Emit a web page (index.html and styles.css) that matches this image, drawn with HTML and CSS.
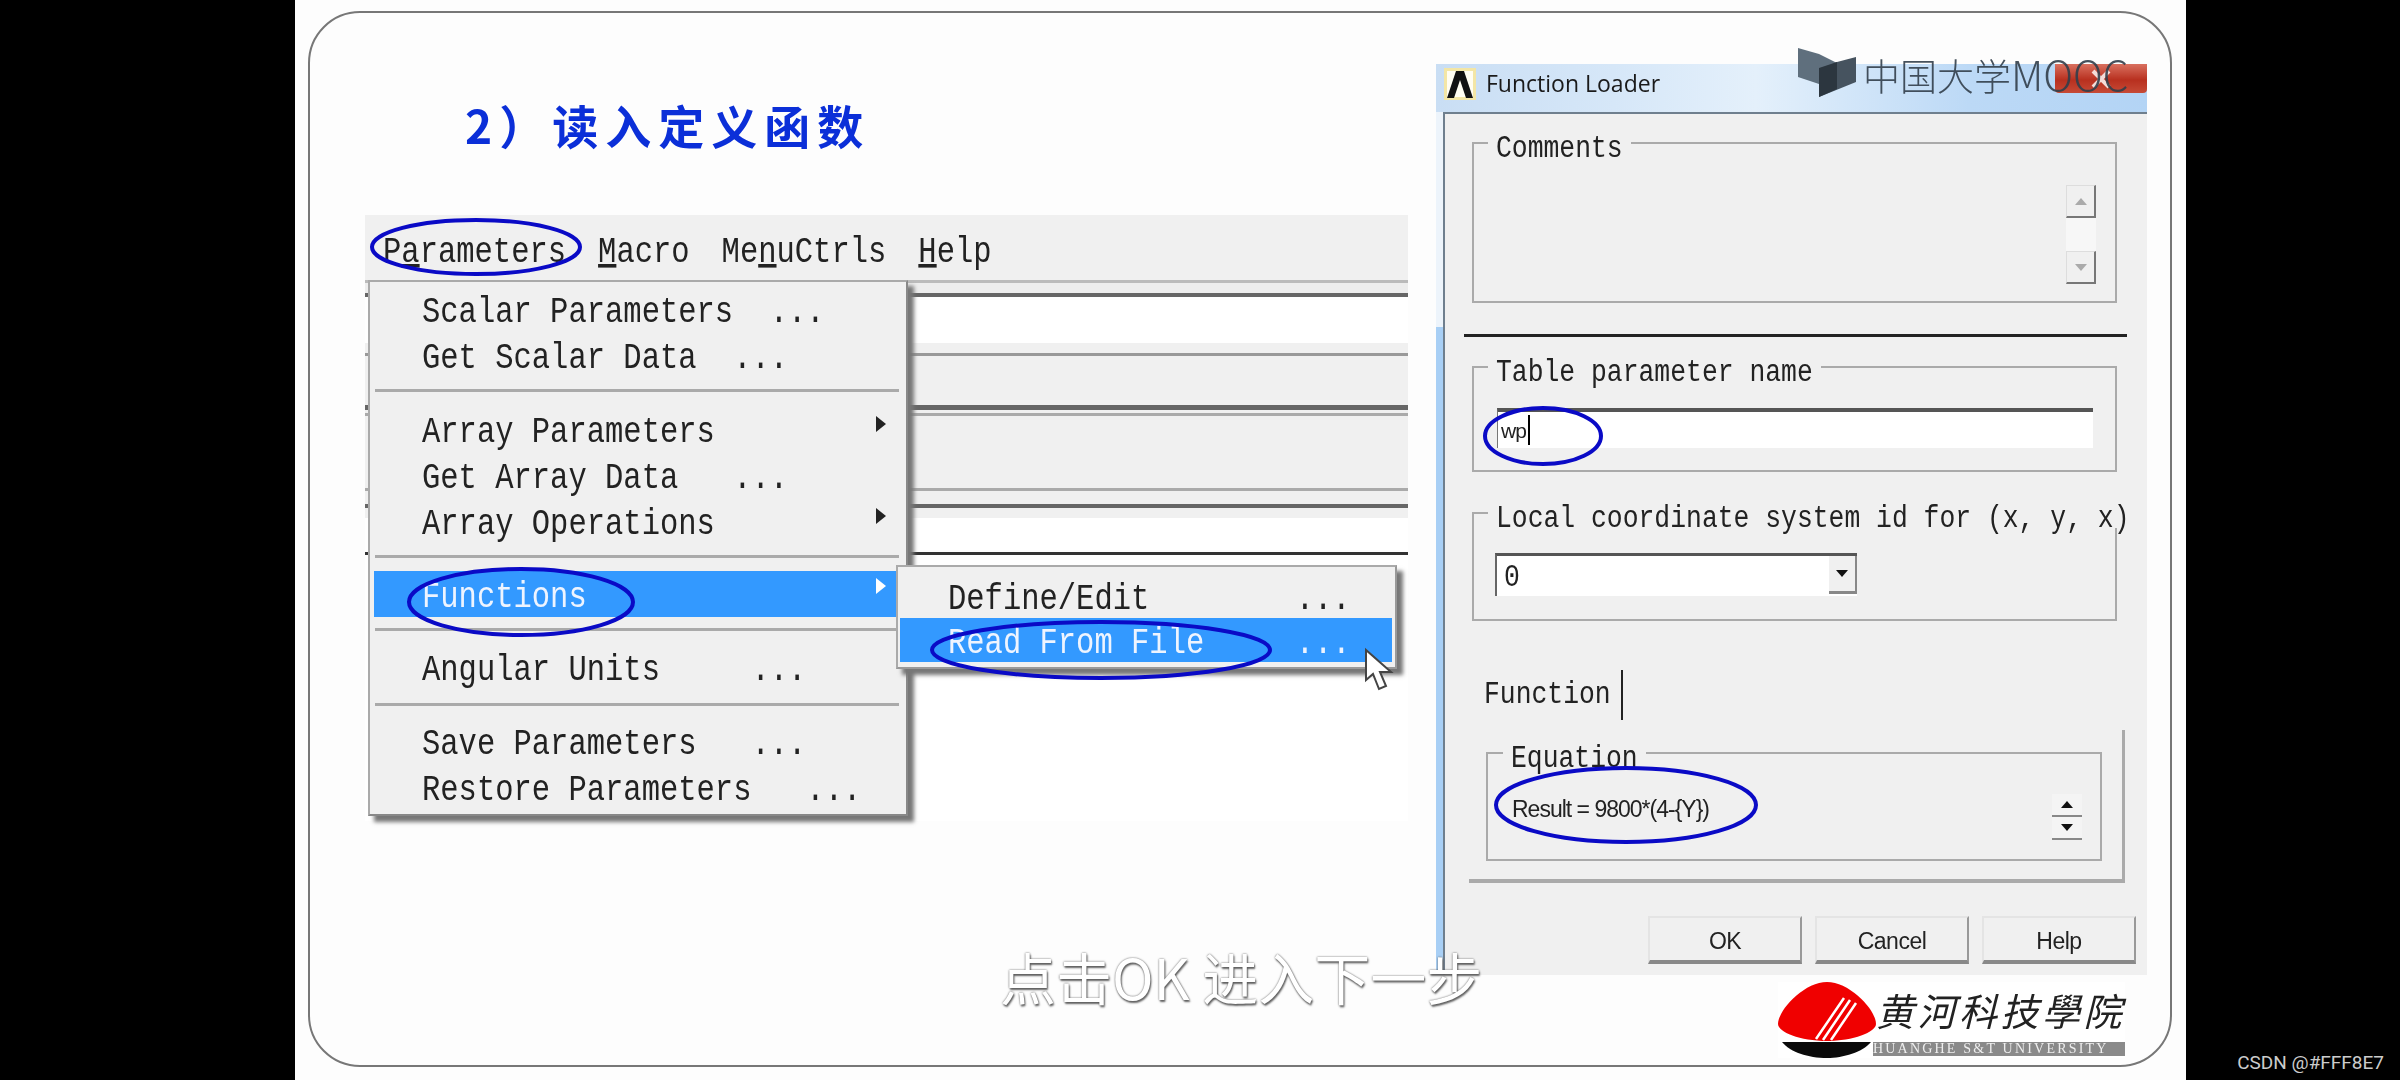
FILE: index.html
```html
<!DOCTYPE html>
<html>
	<head>
		<meta charset="UTF-8">
		<title>读入定义函数</title>
		<link rel="stylesheet" href="styles.css">
	</head>
	<body>
		<div class="slide">
			<div class="frame">
				<div class="left">
					<h1 class="title">2）读入定义函数</h1>
					<div class="capture">
						<div class="menubar">
							<span class="mono">P<u>a</u>rameters</span>
							<span class="mono"><u>M</u>acro</span>
							<span class="mono">Me<u>n</u>uCtrls</span>
							<span class="mono"><u>H</u>elp</span>
						</div>
						<div class="stripes"></div>
						<div class="menu">
							<div class="row"><span class="mono">Scalar Parameters  ...</span></div>
							<div class="row"><span class="mono">Get Scalar Data  ...</span></div>
							<div class="sep sep1"></div>
							<div class="row"><span class="mono">Array Parameters</span><i class="arrow"></i></div>
							<div class="row"><span class="mono">Get Array Data   ...</span></div>
							<div class="row"><span class="mono">Array Operations</span><i class="arrow"></i></div>
							<div class="sep sep2"></div>
							<div class="row active"><span class="mono">Functions</span><i class="arrow"></i></div>
							<div class="sep sep3"></div>
							<div class="row"><span class="mono">Angular Units     ...</span></div>
							<div class="sep sep4"></div>
							<div class="row"><span class="mono">Save Parameters   ...</span></div>
							<div class="row"><span class="mono">Restore Parameters   ...</span></div>
							<div class="submenu">
								<div class="row"><span class="mono">Define/Edit        ...</span></div>
								<div class="row active"><span class="mono">Read From File     ...</span></div>
							</div>
						</div>
					</div>
				</div>

				<div class="dialog">
					<div class="titlebar">
						<svg class="ansys" width="32" height="32" viewBox="0 0 32 32">
							<rect x="0" y="0" width="32" height="32" fill="#f3e6a6"/>
							<rect x="3" y="3" width="26" height="26" fill="#fffdf2"/>
							<polygon points="12,3 20,3 29,30 22,30 16,12 10,30 3,30" fill="#111"/>
						</svg>
						<span class="wintitle">Function Loader</span>
						<div class="close">
							<svg width="24" height="22" viewBox="0 0 24 22"><path d="M4 3 L20 19 M20 3 L4 19" stroke="#f4dcd8" stroke-width="4"/></svg>
						</div>
					</div>
					<div class="winbody">
						<div class="winside"></div>
						<div class="client">
							<fieldset class="group comments">
								<legend class="mono-legend"><span class="mono">Comments</span></legend>
								<div class="scroll">
									<div class="spin"><i class="up"></i></div>
									<div class="track"></div>
									<div class="spin"><i class="down"></i></div>
								</div>
							</fieldset>
							<div class="blackline"></div>
							<fieldset class="group tablename">
								<legend class="mono-legend"><span class="mono">Table parameter name</span></legend>
								<div class="input">wp<i class="caret"></i></div>
							</fieldset>
							<fieldset class="group local">
								<legend class="mono-legend"><span class="mono">Local coordinate system id for (x, y, x)</span></legend>
								<div class="combo">
									<span class="mono">0</span>
									<div class="dropbtn"><i class="down dark"></i></div>
								</div>
							</fieldset>
							<div class="tab"><span class="mono">Function</span></div>
							<div class="tabpanel">
								<fieldset class="group equation">
									<legend class="mono-legend"><span class="mono">Equation</span></legend>
									<div class="eqrow">
										<span class="result">Result = 9800*(4-{Y})</span>
										<div class="eqspin">
											<div class="minispin"><i class="up dark"></i></div>
											<div class="minispin"><i class="down dark"></i></div>
										</div>
									</div>
								</fieldset>
							</div>
							<div class="buttons">
								<div class="btn">OK</div>
								<div class="btn">Cancel</div>
								<div class="btn">Help</div>
							</div>
						</div>
					</div>
				</div>
			</div>

			<!-- 蓝色圈和鼠标，坐标直接用截图上的位置 -->
			<svg class="marks" width="1891" height="1080" viewBox="295 0 1891 1080">
				<g fill="none" stroke="#0a0ac6" stroke-width="4">
					<ellipse cx="476" cy="247" rx="104" ry="27"/>
					<ellipse cx="521" cy="602" rx="112" ry="33"/>
					<ellipse cx="1101" cy="650" rx="169" ry="28"/>
					<ellipse cx="1543" cy="436" rx="58" ry="28"/>
					<ellipse cx="1626" cy="805" rx="130" ry="37"/>
				</g>
				<path d="M1366 650 L1366 680 L1373 674 L1379 689 L1386 686 L1380 672 L1391 672 Z" fill="#fff" stroke="#444" stroke-width="2"/>
			</svg>

			<div class="mooc">
				<svg width="60" height="50" viewBox="0 0 60 50">
					<polygon points="0,0 21,6 39,15 21,36 0,29" fill="#5f6f7d"/>
					<polygon points="21,22 39,14 58,9 58,34 21,49" fill="#46535f"/>
					<polygon points="21,20 39,14 39,41 21,49" fill="#2c363f"/>
				</svg>
				<span class="moocname">中国大学<span class="moocen">MOOC</span></span>
			</div>

			<div class="subtitle">点击OK 进入下一步</div>

			<div class="logo">
				<svg width="98" height="76" viewBox="0 0 98 76">
					<path d="M49 0 C72 0 98 28 98 42 C98 50 75 59 49 59 C22 59 0 50 0 42 C0 28 26 0 49 0Z" fill="#f00000"/>
					<path d="M66 16 L38 57 M72 18 L45 58 M78 21 L53 58" stroke="#fff" stroke-width="2.5"/>
					<path d="M4 60 H93 C85 70 65 76 49 76 C30 76 12 70 4 60Z" fill="#0a0a0a"/>
				</svg>
				<div class="logotext">
					<div class="cnname">黄河科技學院</div>
					<div class="enname">HUANGHE S&amp;T UNIVERSITY</div>
				</div>
			</div>
		</div>
		<div class="rightband">CSDN @#FFF8E7</div>
	</body>
</html>
```

FILE: styles.css
```css
*{
	margin: 0;
	padding: 0;
	box-sizing: border-box;
}
body{
	width: 2400px;
	height: 1080px;
	background-color: #000;
	padding-left: 295px;
	display: flex;
	overflow: hidden;
}
.slide{
	position: relative;
	width: 1891px;
	height: 1080px;
	flex: none;
	background-color: #fdfdfd;
	padding: 11px 0 0 13px;
	filter: blur(0.5px);
}
.frame{
	width: 1864px;
	height: 1056px;
	border: 2px solid #777;
	border-radius: 52px;
	display: flex;
	gap: 28px;
	padding-left: 55px;
}
.mono{
	display: inline-block;
	font-family: "Liberation Mono", monospace;
	white-space: pre;
	transform: scaleY(1.2);
}

/* 左边的菜单截图 */
.left{
	width: 1043px;
	flex: none;
}
.title{
	margin: 81px 0 61px 100px;
	height: 60px;
	line-height: 60px;
	font-family: "Noto Sans CJK SC", sans-serif;
	font-size: 46px;
	font-weight: 700;
	letter-spacing: 7px;
	color: #0b2fd8;
	white-space: nowrap;
}
.capture{
	position: relative;
	width: 1043px;
}
.menubar{
	height: 65px;
	background-color: #f0f0f0;
	padding: 21px 0 0 18px;
	display: flex;
	gap: 32px;
	font-size: 30.5px;
	line-height: 34px;
	color: #222;
}
.stripes{
	height: 541px;
	background: linear-gradient(
		#bbb 0, #bbb 3px,
		#ededed 3px, #ededed 13px,
		#666 13px, #666 17px,
		#fff 17px, #fff 63px,
		#f0f0f0 63px, #f0f0f0 73px,
		#999 73px, #999 76px,
		#f0f0f0 76px, #f0f0f0 125px,
		#666 125px, #666 130px,
		#f0f0f0 130px, #f0f0f0 133px,
		#aaa 133px, #aaa 136px,
		#f0f0f0 136px, #f0f0f0 208px,
		#aaa 208px, #aaa 211px,
		#f0f0f0 211px, #f0f0f0 224px,
		#666 224px, #666 228px,
		#f0f0f0 228px, #f0f0f0 238px,
		#fff 238px, #fff 272px,
		#333 272px, #333 275px,
		#fff 275px, #fff 541px
	);
}
.menu{
	position: absolute;
	left: 3px;
	top: 65px;
	width: 540px;
	height: 536px;
	padding-top: 7px;
	background-color: #f0f0f0;
	border: 2px solid #aaa;
	border-right-color: #888;
	border-bottom-color: #888;
	box-shadow: 6px 6px 4px #777;
	font-size: 30.5px;
	color: #222;
}
.row{
	height: 46px;
	line-height: 46px;
	margin: 0 9px 0 4px;
	padding: 0 11px 0 48px;
	display: flex;
	justify-content: space-between;
}
.row.active{
	background-color: #3399ff;
	color: #eef4ff;
}
.active .mono, .submenu .mono{
	transform: translateY(3px) scaleY(1.2);
}
.arrow{
	width: 0;
	height: 0;
	margin-top: 7px;
	border-left: 10px solid #222;
	border-top: 8px solid transparent;
	border-bottom: 8px solid transparent;
}
.active .arrow{
	border-left-color: #fff;
}
.sep{
	height: 3px;
	margin-left: 5px;
	margin-right: 7px;
	background-color: #aaa;
}
.sep1{
	margin-top: 8px;
	margin-bottom: 17px;
}
.sep2{
	margin-top: 8px;
	margin-bottom: 13px;
}
.sep3{
	margin-top: 11px;
	margin-bottom: 16px;
}
.sep4{
	margin-top: 10px;
	margin-bottom: 15px;
}
.submenu{
	position: absolute;
	left: 526px;
	top: 283px;
	width: 501px;
	height: 104px;
	padding-top: 7px;
	background-color: #f0f0f0;
	border: 2px solid #aaa;
	border-right-color: #999;
	border-bottom-color: #999;
	box-shadow: 6px 6px 4px #777;
}
.submenu .row{
	height: 44px;
	line-height: 44px;
	margin: 0 3px 0 2px;
}

/* 右边的对话框 */
.dialog{
	width: 711px;
	height: 911px;
	flex: none;
	margin-top: 51px;
	display: flex;
	flex-direction: column;
}
.titlebar{
	height: 48px;
	flex: none;
	padding: 4px 0 0 8px;
	display: flex;
	align-items: flex-start;
	background: linear-gradient(90deg, #c9def4 0, #d6e7f8 25%, #e4f0fb 45%, #bcd9f6 75%, #b3d4f5 100%);
}
.ansys{
	flex: none;
}
.wintitle{
	margin: 0 0 0 10px;
	line-height: 30px;
	font-family: "Open Sans", sans-serif;
	font-size: 23px;
	color: #1a1a1a;
}
.close{
	width: 92px;
	height: 29px;
	margin: -4px 0 0 auto;
	background: linear-gradient(#d9705f, #b8301f 55%, #c64a36);
	border-radius: 0 0 4px 4px;
	display: flex;
	align-items: center;
	justify-content: center;
}
.winbody{
	flex: 1;
	display: flex;
	min-height: 0;
}
.winside{
	width: 7px;
	flex: none;
	background: linear-gradient(#edf4fb 0, #edf4fb 215px, #a8cff5 215px);
}
.client{
	flex: 1;
	min-width: 0;
	background-color: #f0f0f0;
	border-left: 2px solid #6f7f8e;
	border-top: 2px solid #6f7f8e;
	padding: 14px 0 0 27px;
	font-size: 26.4px;
	color: #222;
}
.group{
	width: 645px;
	border: 2px solid #aaa;
	min-width: 0;
}
.mono-legend{
	margin-left: 14px;
	padding: 0 8px;
	height: 30px;
	line-height: 30px;
	white-space: nowrap;
}
.mono-legend .mono{
	transform: translateY(4px) scaleY(1.2);
}
.comments{
	height: 175px;
}
.scroll{
	width: 30px;
	margin: 27px 0 0 592px;
}
.spin{
	width: 30px;
	height: 33px;
	background-color: #f0f0f0;
	border-right: 2px solid #777;
	border-bottom: 2px solid #777;
	border-top: 1px solid #ddd;
	border-left: 1px solid #ddd;
	display: flex;
	align-items: center;
	justify-content: center;
}
.track{
	height: 33px;
	background-color: #f7f7f7;
}
.up, .down{
	width: 0;
	height: 0;
	border-left: 6px solid transparent;
	border-right: 6px solid transparent;
}
.up{
	border-bottom: 7px solid #aaa;
}
.down{
	border-top: 7px solid #aaa;
}
.up.dark{
	border-bottom-color: #111;
}
.down.dark{
	border-top-color: #111;
}
.blackline{
	width: 663px;
	height: 3px;
	margin: 31px 0 0 -8px;
	background-color: #222;
}
.tablename{
	height: 120px;
	margin-top: 15px;
}
.input{
	width: 596px;
	height: 40px;
	margin: 26px 0 0 23px;
	background-color: #fff;
	border-top: 4px solid #555;
	border-left: 1px solid #777;
	padding: 3px 0 0 3px;
	display: flex;
	font-family: "Liberation Sans", sans-serif;
	font-size: 21px;
	letter-spacing: -1px;
	line-height: 32px;
}
.caret{
	width: 2px;
	height: 30px;
	margin-left: 2px;
	background-color: #000;
}
.local{
	height: 123px;
	margin-top: 26px;
}
.combo{
	width: 362px;
	height: 43px;
	margin: 25px 0 0 21px;
	background-color: #fff;
	border-top: 3px solid #555;
	border-left: 2px solid #666;
	padding-left: 7px;
	display: flex;
	justify-content: space-between;
	line-height: 42px;
}
.dropbtn{
	width: 28px;
	height: 38px;
	background-color: #f0f0f0;
	border-right: 2px solid #888;
	border-bottom: 3px solid #888;
	display: flex;
	align-items: center;
	justify-content: center;
}
.tab{
	width: 137px;
	height: 50px;
	margin: 49px 0 0 14px;
	border-right: 2px solid #222;
	line-height: 46px;
}
.tab .mono{
	margin-left: -2px;
}
.tabpanel{
	width: 656px;
	height: 153px;
	margin: 10px 0 0 -3px;
	padding: 8px 0 0 17px;
	border-right: 3px solid #aaa;
	border-bottom: 4px solid #aaa;
}
.equation{
	width: 616px;
	height: 123px;
}
.equation .mono-legend{
	margin-left: 15px;
}
.eqrow{
	height: 47px;
	margin-top: 25px;
	padding: 0 18px 0 24px;
	display: flex;
	justify-content: space-between;
	align-items: center;
}
.result{
	margin-top: -14px;
	font-family: "Liberation Sans", sans-serif;
	font-size: 23px;
	letter-spacing: -1px;
	color: #222;
}
.minispin{
	width: 30px;
	height: 23px;
	background-color: #f4f4f4;
	border-bottom: 2px solid #888;
	display: flex;
	align-items: center;
	justify-content: center;
}
.buttons{
	width: 661px;
	margin: 33px 0 0 176px;
	display: flex;
	gap: 13px;
}
.btn{
	width: 154px;
	height: 48px;
	background-color: #f0f0f0;
	border: 2px solid #e4e4e4;
	border-right-color: #999;
	border-bottom: 4px solid #888;
	text-align: center;
	line-height: 46px;
	font-family: "Liberation Sans", sans-serif;
	font-size: 23px;
	letter-spacing: -0.5px;
	color: #222;
}

/* 盖在上面的东西 */
.marks{
	position: absolute;
	left: 0;
	top: 0;
	pointer-events: none;
}
.mooc{
	position: absolute;
	left: 1503px;
	top: 48px;
	display: flex;
	gap: 5px;
}
.moocname{
	font-family: "Noto Sans CJK SC", sans-serif;
	font-size: 37px;
	font-weight: 300;
	line-height: 50px;
	color: rgba(50, 62, 74, 0.9);
	white-space: nowrap;
}
.moocen{
	font-size: 41px;
}
.subtitle{
	position: absolute;
	left: 705px;
	top: 936px;
	font-family: "Noto Sans CJK SC", sans-serif;
	font-size: 56px;
	font-weight: 400;
	line-height: 80px;
	color: #fff;
	text-shadow: 0 0 2px #555, 1px 2px 2px #666;
	white-space: nowrap;
}
.logo{
	position: absolute;
	left: 1483px;
	top: 982px;
	display: flex;
	background-color: #fff;
}
.logotext{
	width: 252px;
	margin-left: -3px;
}
.cnname{
	height: 60px;
	padding-left: 3px;
	font-family: "Noto Sans CJK SC", sans-serif;
	font-size: 38px;
	font-style: italic;
	letter-spacing: 3.5px;
	line-height: 56px;
	color: #222;
}
.enname{
	height: 14px;
	background-color: #8a8a8a;
	font-family: "Liberation Serif", serif;
	font-size: 14px;
	letter-spacing: 2.2px;
	line-height: 14px;
	color: #eee;
	white-space: nowrap;
	overflow: hidden;
}
.rightband{
	width: 214px;
	height: 1080px;
	padding: 1050px 16px 0 0;
	text-align: right;
	font-family: "Roboto", sans-serif;
	font-size: 19px;
	line-height: 26px;
	color: #ccc;
}
```
